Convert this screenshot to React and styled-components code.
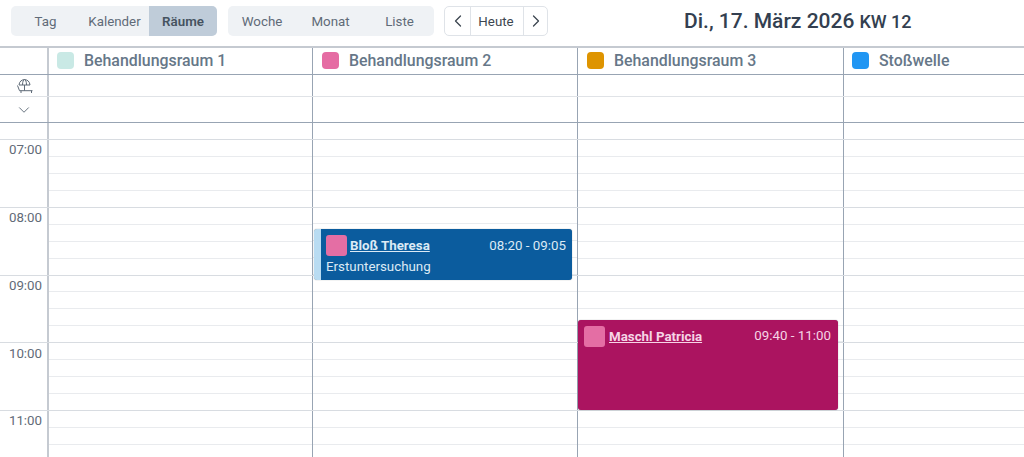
import React from 'react'
import styled, { createGlobalStyle } from 'styled-components'
import { ChevronDown, ChevronLeft, ChevronRight } from 'lucide-react'

const GlobalStyle = createGlobalStyle`
	html, body {
		margin: 0;
		padding: 0;
		height: 100%;
		overflow: hidden;
		background: #fff;
		font-family: Roboto, "Liberation Sans", sans-serif;
	}
	* {
		box-sizing: border-box;
	}
`

const Page = styled.div`
	width: 1024px;
	height: 457px;
	overflow: hidden;
`
const Toolbar = styled.div`
	display: flex;
	align-items: center;
	height: 46px;
	padding: 0 0 4px 11px;
`
const SegmentGroup = styled.div`
	display: flex;
	height: 30px;
	margin-right: ${(p) => p.$gap}px;
	background: #eff2f5;
	border-radius: 5px;
	overflow: hidden;
`
const Segment = styled.div`
	display: flex;
	align-items: center;
	justify-content: center;
	width: ${(p) => p.$width}px;
	font-size: 13.33px;
	font-weight: ${(p) => (p.$active ? 600 : 400)};
	color: ${(p) => (p.$active ? '#45525f' : '#5f6b78')};
	background: ${(p) => (p.$active ? '#bfccd9' : 'transparent')};
`
const Pager = styled.div`
	display: flex;
	height: 30px;
	border: 1px solid #dfe3e8;
	border-radius: 5px;
	color: #3c4650;
`
const PagerButton = styled.div`
	display: flex;
	align-items: center;
	justify-content: center;
	width: ${(p) => p.$width}px;
	padding-right: ${(p) => (p.$label ? 2 : 0)}px;
	font-size: 13.33px;
	border-left: ${(p) => (p.$divider ? '1px solid #dfe3e8' : 'none')};
`
const DateTitle = styled.div`
	margin-left: 136px;
	font-size: 21px;
	font-weight: 500;
	color: #333f50;
	white-space: nowrap;
`
const Week = styled.span`
	font-size: 18px;
	margin-left: 5px;
`
const Calendar = styled.div`
	border-top: 2px solid #c5cad1;
`
const Row = styled.div`
	display: grid;
	grid-template-columns: 49px 264px 265px 266px 1fr;
	height: ${(p) => p.$height}px;
	border-bottom: 1px solid ${(p) => p.$line};
`
const TimeCell = styled.div`
	display: flex;
	align-items: center;
	justify-content: center;
	padding-left: ${(p) => p.$inset || 0}px;
	border-right: 2px solid #c5cad1;
	color: #5f6b78;
`
const HourCell = styled(TimeCell)`
	align-items: flex-start;
	padding-top: 2.3px;
	padding-left: 4px;
	font-size: 13.33px;
	color: #626b77;
`
const Cell = styled.div`
	position: relative;
	display: flex;
	flex-direction: column;
	border-right: ${(p) => (p.$last ? 'none' : '1px solid #98a4b3')};
`
const RoomCell = styled(Cell)`
	flex-direction: row;
	align-items: center;
	padding-left: ${(p) => p.$pad}px;
	padding-bottom: 1px;
	font-size: 15.9px;
	font-weight: 500;
	color: #667788;
`
const Swatch = styled.span`
	width: 17px;
	height: 17px;
	margin-right: 10px;
	border-radius: 4px;
	background: ${(p) => p.$color};
`
const Slot = styled.div`
	flex: 1;
	border-bottom: 1px solid #e9ebee;
	&:last-of-type {
		border-bottom: none;
	}
`
const Event = styled.div`
	position: absolute;
	z-index: 2;
	left: ${(p) => p.$left}px;
	right: 5px;
	top: ${(p) => p.$top}px;
	height: ${(p) => p.$h}px;
	padding: 6px ${(p) => (p.$accent ? 6 : 7)}px 0 ${(p) => (p.$accent ? 5 : 6)}px;
	border-radius: 3px;
	border-left: ${(p) => (p.$accent ? `7px solid ${p.$accent}` : 'none')};
	background: ${(p) => p.$bg};
	color: ${(p) => p.$text};
	font-size: 13.33px;
	box-shadow: 0 0 1px rgba(40, 50, 60, 0.6);
`
const EventHead = styled.div`
	display: flex;
	align-items: center;
	height: 21px;
`
const EventIcon = styled.span`
	width: 21px;
	height: 21px;
	margin-right: ${(p) => p.$gap}px;
	border-radius: 3px;
	background: #e46ea4;
`
const EventName = styled.span`
	font-weight: 700;
	text-decoration: underline;
`
const EventTime = styled.span`
	margin-left: auto;
	margin-top: -1px;
`
const EventNote = styled.div`
	margin-top: 3px;
`

const rooms = [
	{ name: 'Behandlungsraum 1', color: '#c9e9e5', pad: 8 },
	{ name: 'Behandlungsraum 2', color: '#e56ca3', pad: 9 },
	{ name: 'Behandlungsraum 3', color: '#de9400', pad: 9 },
	{ name: 'Stoßwelle', color: '#2196f3', pad: 8 },
]

const hours = ['07:00', '08:00', '09:00', '10:00', '11:00']

const LoungeIcon = () => (
	<svg width="17" height="17" viewBox="0 0 17 17" fill="none" stroke="#5f6b78" strokeWidth="1">
		<path d="M2 8C2.5 .8 12.5 .8 13 8Z" />
		<path d="M5.5 8C5.5 4.5 6.5 2.5 7.5 2.5C8.5 2.5 9.5 4.5 9.5 8" />
		<path d="M7.5 8v5.7" />
		<path d="M.5 8.5 2.5 13.7H15.5" />
		<path d="M4 13.7v2.3M14.5 13.7v2.3" />
	</svg>
)

const Slots = () => (
	<>
		<Slot />
		<Slot />
		<Slot />
		<Slot />
	</>
)

const EmptyCells = () => (
	<>
		<Cell />
		<Cell />
		<Cell />
		<Cell $last />
	</>
)

const App = () => {
	return (
		<Page>
			<GlobalStyle />
			<Toolbar>
				<SegmentGroup $gap={11}>
					<Segment $width={69}>Tag</Segment>
					<Segment $width={69}>Kalender</Segment>
					<Segment $width={68} $active>Räume</Segment>
				</SegmentGroup>
				<SegmentGroup $gap={10}>
					<Segment $width={68}>Woche</Segment>
					<Segment $width={69}>Monat</Segment>
					<Segment $width={69}>Liste</Segment>
				</SegmentGroup>
				<Pager>
					<PagerButton $width={25}><ChevronLeft size={20} strokeWidth={1.5} /></PagerButton>
					<PagerButton $width={53} $divider $label>Heute</PagerButton>
					<PagerButton $width={24} $divider><ChevronRight size={20} strokeWidth={1.5} /></PagerButton>
				</Pager>
				<DateTitle>Di., 17. März 2026<Week>KW 12</Week></DateTitle>
			</Toolbar>
			<Calendar>
				<Row $height={27} $line="#98a4b3">
					<TimeCell />
					{rooms.map((room, i) => (
						<RoomCell key={room.name} $pad={room.pad} $last={i === 3}>
							<Swatch $color={room.color} />
							{room.name}
						</RoomCell>
					))}
				</Row>
				<Row $height={22} $line="#e0e3e7">
					<TimeCell $inset={3}><LoungeIcon /></TimeCell>
					<EmptyCells />
				</Row>
				<Row $height={26} $line="#98a4b3">
					<TimeCell $inset={1}><ChevronDown size={18} strokeWidth={1.25} /></TimeCell>
					<EmptyCells />
				</Row>
				<Row $height={17} $line="#d8dce1">
					<TimeCell />
					<EmptyCells />
				</Row>
				{hours.map((hour, index) => (
					<Row key={hour} $height={67.75} $line="#d8dce1">
						<HourCell>{hour}</HourCell>
						<Cell><Slots /></Cell>
						<Cell>
							<Slots />
							{index === 1 && (
								<Event $left={1} $top={21.5} $h={51} $accent="#b9dcf2" $bg="#0b5c9e" $text="#dceaf5">
									<EventHead>
										<EventIcon $gap={3} />
										<EventName>Bloß Theresa</EventName>
										<EventTime>08:20 - 09:05</EventTime>
									</EventHead>
									<EventNote>Erstuntersuchung</EventNote>
								</Event>
							)}
						</Cell>
						<Cell>
							<Slots />
							{index === 2 && (
								<Event $left={0} $top={44} $h={90} $bg="#ab1460" $text="#f6d5e6">
									<EventHead>
										<EventIcon $gap={4} />
										<EventName>Maschl Patricia</EventName>
										<EventTime>09:40 - 11:00</EventTime>
									</EventHead>
								</Event>
							)}
						</Cell>
						<Cell $last><Slots /></Cell>
					</Row>
				))}
			</Calendar>
		</Page>
	)
}

export default App
